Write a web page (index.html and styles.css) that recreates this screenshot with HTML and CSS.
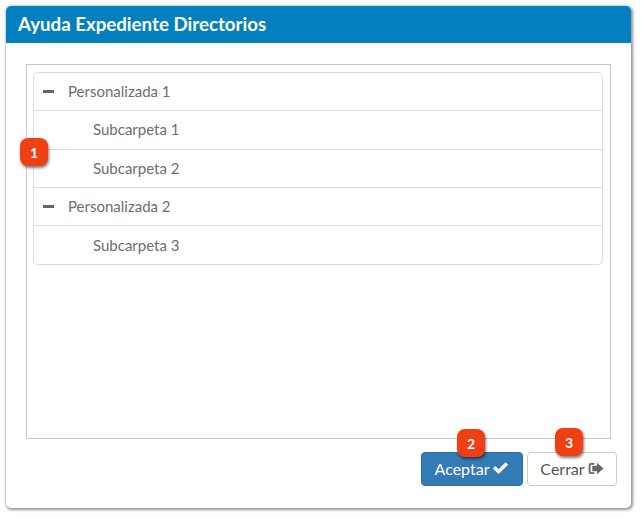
FILE: index.html
```html
<!DOCTYPE html>
<html lang="es">
<head>
<meta charset="utf-8">
<title>Ayuda Expediente Directorios</title>
<link rel="stylesheet" href="styles.css">
</head>
<body>
<div class="dialog">
  <header class="dialog-head">Ayuda Expediente Directorios</header>
  <div class="dialog-body">
    <div class="frame">
      <ul class="tree">
        <li class="row"><span class="minus"></span>Personalizada 1</li>
        <li class="row sub">Subcarpeta 1</li>
        <li class="row sub">Subcarpeta 2</li>
        <li class="row"><span class="minus"></span>Personalizada 2</li>
        <li class="row sub">Subcarpeta 3</li>
      </ul>
    </div>
    <div class="actions">
      <button class="btn primary">Aceptar
        <svg class="ico" width="17" height="14" viewBox="0 0 16 13"><path d="M.8 7 L3.2 4.6 L6.2 7.6 L12.8 1 L15.2 3.4 L6.2 12.2 Z" fill="#fff"/></svg>
      </button>
      <button class="btn plain">Cerrar
        <svg class="ico" width="16" height="13" viewBox="0 0 15 12"><path d="M6 .8 H2.8 A2.2 2.2 0 0 0 .6 3 V9 A2.2 2.2 0 0 0 2.8 11.2 H6 V9.4 H3 A.6 .6 0 0 1 2.4 8.8 V3.2 A.6 .6 0 0 1 3 2.6 H6 Z" fill="#666"/><path d="M8.4 .6 L14.6 6 L8.4 11.4 V8.5 H4 V3.5 H8.4 Z" fill="#666"/></svg>
      </button>
    </div>
  </div>
  <span class="badge b1">1</span>
  <span class="badge b2">2</span>
  <span class="badge b3">3</span>
</div>
</body>
</html>
```
FILE: styles.css
```css
* { box-sizing: border-box; }
html, body { margin: 0; background: #fff; }
body {
  width: 642px;
  height: 518px;
  padding: 6px 11px 10px 6px;
  font-family: "Lato", "Open Sans", sans-serif;
  overflow: hidden;
}
.dialog {
  position: relative;
  width: 625px;
  height: 502px;
  background: #fff;
  border-radius: 5px;
  box-shadow: 1px 1px 3px 1px rgba(70, 80, 90, .6);
}
.dialog-head {
  height: 37px;
  background: #0380bd;
  color: #fff;
  font-size: 18.7px;
  font-weight: 700;
  line-height: 37px;
  padding-left: 12px;
  border-radius: 5px 5px 0 0;
}
.dialog-body { padding: 21px 14px 0 20px; }
.frame {
  width: 585px;
  height: 375px;
  padding: 7px 7px 7px 6px;
  border: 1px solid #c9c9c9;
}
.tree {
  list-style: none;
  margin: 0;
  padding: 0;
  border: 1px solid #ddd;
  border-radius: 5px;
}
.row {
  display: flex;
  align-items: center;
  height: 38.3px;
  padding-left: 9px;
  padding-bottom: 1px;
  font-size: 15px;
  color: #6e6e6e;
  border-bottom: 1px solid #ddd;
}
.row:last-child { border-bottom: 0; height: 38px; }
.sub { padding-left: 59px; }
.minus {
  width: 11px;
  height: 3px;
  margin-right: 14px;
  background: #666;
}
.actions {
  display: flex;
  justify-content: flex-end;
  gap: 4px;
  margin-top: 13px;
}
.btn {
  display: flex;
  align-items: center;
  justify-content: center;
  gap: 3px;
  height: 34px;
  padding: 0 0 2px;
  font: 16px "Lato", "Open Sans", sans-serif;
  border-radius: 4px;
}
.primary { width: 102px; color: #fff; background: #337ab7; border: 1px solid #2e6da4; }
.plain { width: 90px; color: #555; background: #fff; border: 1px solid #ccc; }
.badge {
  position: absolute;
  width: 28px;
  height: 28px;
  display: flex;
  align-items: center;
  justify-content: center;
  color: #fff;
  font-size: 14px;
  font-weight: 700;
  background: #ee4013;
  border-radius: 8px;
  box-shadow: 1px 2px 3px rgba(0, 0, 0, .5);
}
.b1 { left: 14px; top: 132px; }
.b2 { left: 451px; top: 423px; }
.b3 { left: 549px; top: 422px; }
```
